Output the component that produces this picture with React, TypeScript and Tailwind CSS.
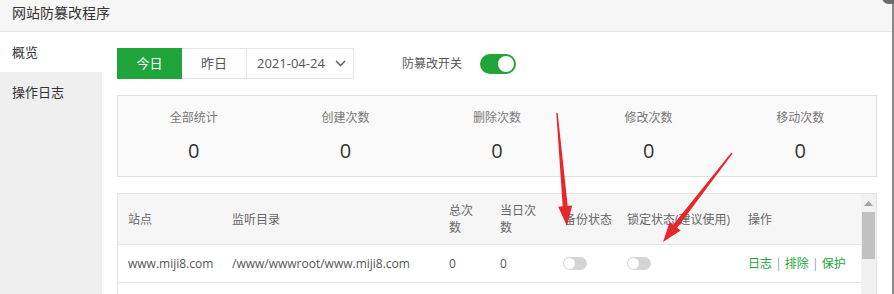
import React from "react";

function Toggle({ on }: { on: boolean }) {
  if (on) {
    return (
      <div className="w-[36px] h-[20px] rounded-full bg-[#20a53a] relative">
        <div className="absolute right-[2px] top-[2px] w-[16px] h-[16px] rounded-full bg-white" />
      </div>
    );
  }
  return (
    <div className="w-[24px] h-[13px] rounded-full bg-[#d4d4d4] relative">
      <div className="absolute left-[1px] top-[1px] w-[11px] h-[11px] rounded-full bg-white" />
    </div>
  );
}

function Row() {
  return (
    <div className="grid grid-cols-[104px_217px_51px_64px_63px_121px_123px] h-[38px] items-center border-b border-[#e6e6e6] text-[12px] text-[#555]">
      <div className="pl-[10px] whitespace-nowrap">www.miji8.com</div>
      <div className="pl-[10px] whitespace-nowrap">/www/wwwroot/www.miji8.com</div>
      <div className="pl-[10px]">0</div>
      <div className="pl-[10px]">0</div>
      <div className="pl-[9px]"><Toggle on={false} /></div>
      <div className="pl-[10px]"><Toggle on={false} /></div>
      <div className="pl-[10px] text-[#20a53a] whitespace-nowrap">
        日志 <span className="text-[#999]">|</span> 排除 <span className="text-[#999]">|</span> 保护
      </div>
    </div>
  );
}

export default function App() {
  const stats = ["全部统计", "创建次数", "删除次数", "修改次数", "移动次数"];
  return (
    <div
      className="w-[894px] h-[294px] overflow-hidden relative bg-white flex"
      style={{ fontFamily: '"Open Sans","Noto Sans CJK SC",sans-serif' }}
    >
      <div className="w-[892px] h-full flex flex-col">
        <div className="h-[32px] shrink-0 bg-[#f6f6f6] border-b border-[#e8e8e8] pl-[12px] text-[14px] leading-[26px] text-[#333]">
          网站防篡改程序
        </div>
        <div className="flex flex-1 min-h-0">
          <div className="w-[102px] shrink-0 bg-[#efefef] text-[13px] text-[#333]">
            <div className="h-[40px] bg-white pl-[12px] leading-[40px]">概览</div>
            <div className="h-[40px] pl-[12px] leading-[40px]">操作日志</div>
          </div>
          <div className="flex-1 pl-[15px] pr-[15px] pt-[16px] min-w-0">
            <div className="flex items-center h-[31px]">
              <div className="flex h-[31px] text-[13px]">
                <div className="w-[65px] bg-[#20a53a] text-white flex items-center justify-center">今日</div>
                <div className="w-[65px] border-y border-r border-[#e3e3e3] text-[#555] flex items-center justify-center">昨日</div>
                <div className="w-[107px] border-y border-r border-[#e3e3e3] text-[#555] flex items-center pl-[10px] gap-[10px]">
                  <span>2021-04-24</span>
                  <svg width="11" height="7" viewBox="0 0 11 7" fill="none">
                    <path d="M1 1l4.5 4.5L10 1" stroke="#555" strokeWidth="1.4" />
                  </svg>
                </div>
              </div>
              <div className="ml-[48px] text-[12px] text-[#555]">防篡改开关</div>
              <div className="ml-[18px]"><Toggle on={true} /></div>
            </div>

            <div className="mt-[16px] h-[82px] border border-[#e0e0e0] bg-[#fafafa] grid grid-cols-5">
              {stats.map((s) => (
                <div key={s} className="flex flex-col items-center pt-[13px]">
                  <div className="text-[12px] text-[#777] leading-[18px]">{s}</div>
                  <div className="text-[20px] text-[#333] leading-[28px] mt-[10px]">0</div>
                </div>
              ))}
            </div>

            <div className="mt-[16px] border border-[#e3e3e3] flex h-[200px]">
              <div className="w-[743px]">
                <div className="grid grid-cols-[104px_217px_51px_64px_63px_121px_123px] h-[51px] items-center bg-[#f6f6f6] border-b border-[#e6e6e6] text-[12px] text-[#666] leading-[17px]">
                  <div className="pl-[10px]">站点</div>
                  <div className="pl-[10px]">监听目录</div>
                  <div className="pl-[10px]">总次<br />数</div>
                  <div className="pl-[10px]">当日次<br />数</div>
                  <div className="pl-[10px] whitespace-nowrap">备份状态</div>
                  <div className="pl-[10px] whitespace-nowrap">锁定状态(建议使用)</div>
                  <div className="pl-[10px]">操作</div>
                </div>
                <Row />
                <Row />
              </div>
              <div className="w-[17px] bg-[#f1f1f1] flex flex-col items-center pt-[7px]">
                <svg width="9" height="5" viewBox="0 0 9 5">
                  <path d="M0 5L4.5 0L9 5Z" fill="#a3a3a3" />
                </svg>
                <div className="mt-[6px] w-[13px] h-[47px] bg-[#c1c1c1]" />
              </div>
            </div>
          </div>
        </div>
      </div>
      <div className="w-[2px] h-full bg-[#8a8a8a]" />
      <div className="absolute right-[-4px] top-[-9px] w-[16px] h-[13px] rounded-full bg-[#6b6b6b]" />

      <svg className="absolute left-0 top-0 pointer-events-none" width="894" height="294">
        <polygon
          points="557.7,112.9 567.7,205.9 572.2,205.5 567,226 558.2,206.7 562.7,206.3 556.3,113.1"
          fill="#e6262b"
        />
        <polygon
          points="732.6,153.4 677.2,227.7 680.7,230.5 663,242 669.7,221.9 673.2,224.7 731.4,152.6"
          fill="#e6262b"
        />
      </svg>
    </div>
  );
}
